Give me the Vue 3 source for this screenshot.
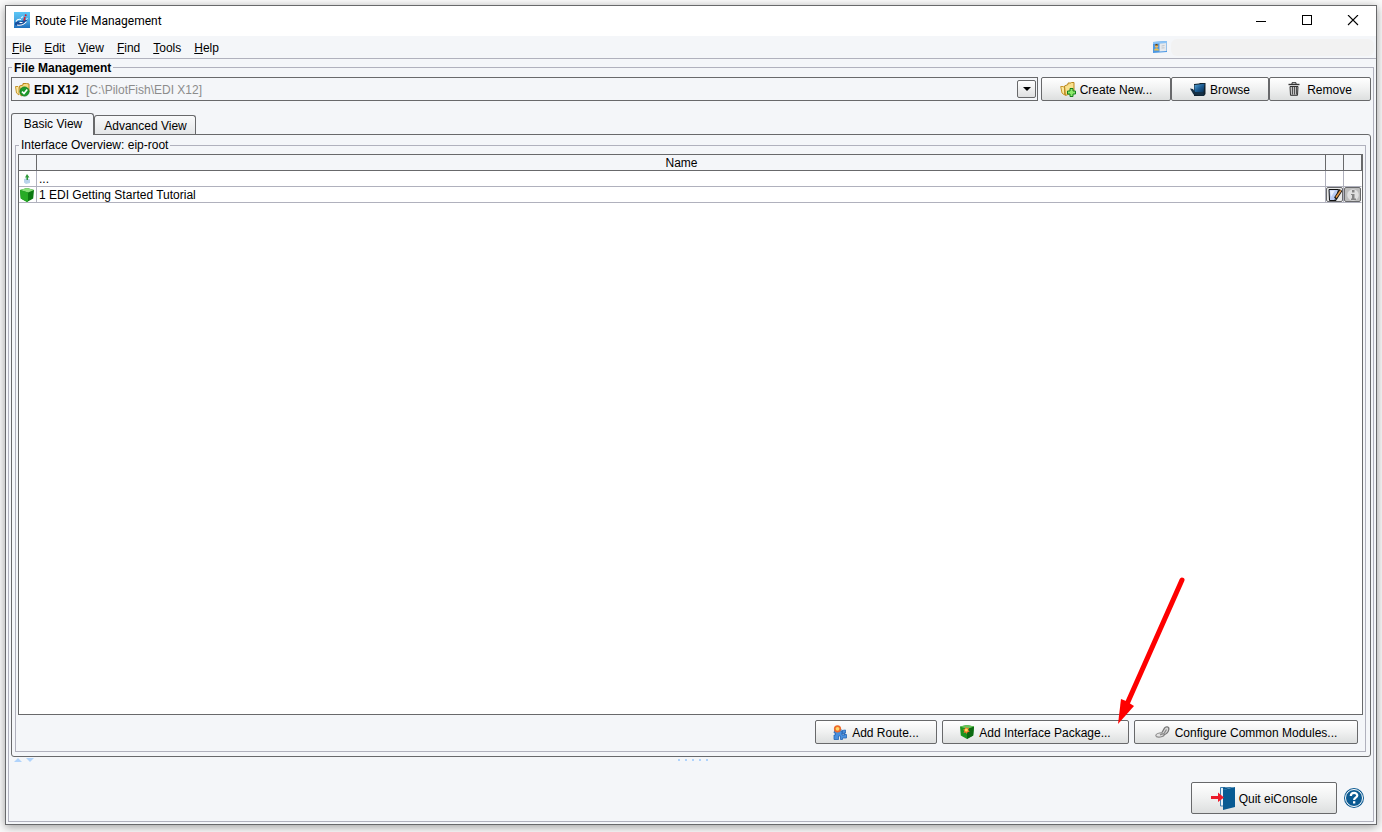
<script setup>
import { ref } from 'vue'

const menus = ['File', 'Edit', 'View', 'Find', 'Tools', 'Help']
const workspace = ref('EDI X12')
const activeTab = ref('basic')
</script>

<template>
  <div class="desktop">
    <main class="window">
      <header class="titlebar">
        <svg class="app-icon" width="16" height="16" viewBox="0 0 16 16" aria-hidden="true">
          <defs>
            <linearGradient id="appBg" x1="0" y1="0" x2="0" y2="1">
              <stop offset="0" stop-color="#5cc6f6" />
              <stop offset=".5" stop-color="#4aa9e2" />
              <stop offset="1" stop-color="#1f6fbd" />
            </linearGradient>
          </defs>
          <rect width="16" height="16" fill="url(#appBg)" />
          <path d="M1 11c1-1.500 3-2 5-1.500l3-1 4-1c0 3-3 6-7 6.500-2 .2-4-.5-5-1z" fill="#164f9e" />
          <path d="M2 9.500c1-1.800 3-2.500 5-2M3 13c3.500.8 7-.3 9.500-3.500" fill="none" stroke="#fff" stroke-width="1.100" />
          <path d="M5.500 10.500h3M12 7.500l1.500-1" stroke="#fff" stroke-width="1" />
          <path d="M7 6l2-1.500" stroke="#d8f1ff" stroke-width="1.200" />
          <path d="M11 5L10 8.500" stroke="#d3202e" stroke-width="1.600" />
          <circle cx="11.700" cy="3.300" r="1" fill="#d3202e" />
        </svg>
        <h1>Route File Management</h1>
        <div class="window-controls">
          <button type="button" aria-label="Minimize">
            <svg width="12" height="12" viewBox="0 0 12 12"><path d="M1 6.500h10" stroke="#000" /></svg>
          </button>
          <button type="button" aria-label="Maximize">
            <svg width="12" height="12" viewBox="0 0 12 12"><rect x="1.500" y=".5" width="9" height="9" fill="none" stroke="#000" /></svg>
          </button>
          <button type="button" aria-label="Close">
            <svg width="12" height="12" viewBox="0 0 12 12"><path d="M1 0l10 10M11 0L1 10" stroke="#000" stroke-width="1.100" /></svg>
          </button>
        </div>
      </header>

      <nav class="menubar">
        <button v-for="m in menus" :key="m" type="button" class="menu"><u>{{ m[0] }}</u>{{ m.slice(1) }}</button>
        <div class="account">
          <svg width="14" height="12" viewBox="0 0 14 12" aria-hidden="true">
            <path d="M0 1L14 0v11L0 12z" fill="#4a97e4" />
            <path d="M0 1L14 0v2L0 3z" fill="#8cc4f6" />
            <path d="M6.500 2.500l7-.5v8l-7 .5z" fill="#e6eaee" />
            <path d="M8.500 5l3-.5M8.500 7l3-.2" stroke="#b4bac2" stroke-width=".8" />
            <circle cx="3.500" cy="5" r="1.800" fill="#f1b95f" />
            <path d="M2 4.500c0-2 3-2 3 0" fill="#5b4320" />
            <path d="M1 9.500c.3-3 4.700-3 5 0z" fill="#efc04a" />
          </svg>
          <span class="account-name"></span>
        </div>
      </nav>

      <fieldset class="group outer">
        <legend class="bold">File Management</legend>

        <div class="toolbar">
          <div class="combo">
            <svg width="15" height="15" viewBox="0 0 15 15" aria-hidden="true">
              <path d="M.5 4.500H3l1 1V13L1.500 11z" fill="#fbe9a0" stroke="#c7962a" />
              <path d="M4.500 4L8 3V1.500h3.500L14 2v8l-8 4z" fill="#f7dc83" stroke="#b9871d" />
              <circle cx="9.500" cy="9.500" r="4.600" fill="#1c9a2c" stroke="#0d7a1c" stroke-width=".8" />
              <path d="M7 9.600l2 2 3.200-4" fill="none" stroke="#fff" stroke-width="1.600" />
            </svg>
            <select v-model="workspace" aria-label="Workspace">
              <option>EDI X12</option>
            </select>
            <span class="path">[C:\PilotFish\EDI X12]</span>
            <button type="button" class="drop" aria-label="Open list">
              <svg width="8" height="4" viewBox="0 0 8 4"><path d="M0 0h8L4 4z" fill="#000" /></svg>
            </button>
          </div>
          <button type="button" class="btn create">
            <svg width="16" height="16" viewBox="0 0 16 16" aria-hidden="true">
              <path d="M.7 5.500h2.300l1.500 1V14L2 12z" fill="#fbe9a0" stroke="#c7962a" />
              <path d="M4.500 5L8 3.500V2h3l.5-.5H14V11l-8.500 3.500z" fill="#f9e08c" stroke="#b9871d" />
              <path d="M10 7.500h3V10h2.500v3H13v2.500h-3V13H7.500v-3H10z" fill="#8be86a" stroke="#12801a" />
            </svg>
            <span>Create New...</span>
          </button>
          <button type="button" class="btn browse">
            <svg width="16" height="15" viewBox="0 0 16 15" aria-hidden="true">
              <defs>
                <linearGradient id="folder" x1="0" y1="0" x2="1" y2="1">
                  <stop offset="0" stop-color="#5fa9d8" />
                  <stop offset=".5" stop-color="#1a5c94" />
                  <stop offset="1" stop-color="#072a4c" />
                </linearGradient>
              </defs>
              <path d="M4 2L9 1.500 10 1h5.500v11L14 14H4z" fill="#10202c" />
              <path d="M4.500 3l10-1.200-1 9H4.500z" fill="url(#folder)" />
              <path d="M0 6.500l3 .5 2 3 8.500.5.5 3.500-10.500-1.500z" fill="#152f44" />
            </svg>
            <span>Browse</span>
          </button>
          <button type="button" class="btn remove">
            <svg width="12" height="14" viewBox="0 0 12 14" aria-hidden="true">
              <path d="M4 2V.7h4V2" fill="none" stroke="#333" />
              <path d="M.5 2.500h11" stroke="#333" stroke-width="1.400" />
              <path d="M2 4.500h8l-.5 8.800h-7z" fill="#c4c4c4" stroke="#333" />
              <path d="M4.500 5v7.500M6.500 5v7.500M8.500 5v7.500" stroke="#444" stroke-width=".9" />
            </svg>
            <span>Remove</span>
          </button>
        </div>

        <div class="tabs" role="tablist">
          <button type="button" role="tab" class="tab" :class="{ active: activeTab === 'basic' }" :aria-selected="activeTab === 'basic'" @click="activeTab = 'basic'">Basic View</button>
          <button type="button" role="tab" class="tab" :class="{ active: activeTab === 'advanced' }" :aria-selected="activeTab === 'advanced'" @click="activeTab = 'advanced'">Advanced View</button>
        </div>

        <section class="panel" role="tabpanel">
          <fieldset class="group inner">
            <legend>Interface Overview: eip-root</legend>
            <div class="sheet">
              <table>
                <colgroup>
                  <col class="narrow" />
                  <col />
                  <col class="narrow" />
                  <col class="narrow" />
                </colgroup>
                <thead>
                  <tr><th></th><th>Name</th><th></th><th></th></tr>
                </thead>
                <tbody>
                  <tr>
                    <td class="icon">
                      <svg width="8" height="10" viewBox="0 0 8 10" aria-hidden="true">
                        <path d="M1 5l3-1 3 1.500V9L3 10 1 8.500z" fill="#b9d3ea" />
                        <path d="M4 0l2.500 3.500H5V6H3.500V3.500H2z" fill="#2f9a3c" />
                      </svg>
                    </td>
                    <td>...</td>
                    <td></td>
                    <td></td>
                  </tr>
                  <tr>
                    <td class="icon">
                      <svg width="14" height="14" viewBox="0 0 14 14" aria-hidden="true">
                        <path d="M0 2l7-2 7 2-.8 8.500L7 14 .8 10.500z" fill="#0c7a12" />
                        <path d="M0 2l7-2 7 2-6 2.500z" fill="#8be07c" />
                        <path d="M0 2l8 2.500V13.500L7 14 .8 10.500z" fill="#27ab26" />
                      </svg>
                    </td>
                    <td>1 EDI Getting Started Tutorial</td>
                    <td class="icon">
                      <button type="button" class="cell-btn" aria-label="Edit">
                        <svg width="14" height="12" viewBox="0 0 14 12">
                          <path d="M1 .5h9.500L8 11.500H1.500z" fill="#b9cbf5" stroke="#111" />
                          <path d="M2 1.500h5L3 8z" fill="#eaf0ff" />
                          <path d="M13 1L7.500 9.500" stroke="#111" stroke-width="3.400" />
                          <path d="M12.800 1.500L8 8.500" stroke="#e89a4a" stroke-width="1.500" />
                          <path d="M6.500 11l.5-2 1.500 1z" fill="#111" />
                        </svg>
                      </button>
                    </td>
                    <td class="icon">
                      <button type="button" class="cell-btn info" aria-label="Information">
                        <svg width="14" height="12" viewBox="0 0 14 12">
                          <circle cx="7" cy="6" r="5.800" fill="#e0e0e0" />
                          <path d="M6 1h2.500v2.500H6zM5 5h3.500v4.500H10V11H5V9.500h1V6H5z" fill="#858585" />
                        </svg>
                      </button>
                    </td>
                  </tr>
                </tbody>
              </table>
            </div>
            <div class="actions">
              <button type="button" class="btn route">
                <svg width="14" height="15" viewBox="0 0 14 15" aria-hidden="true">
                  <path d="M2 4h6v2.500c1.500-.8 2.500.5 1 2V10H12V8.500L9 9V5.500l3.500-.5V8H11v1.500h2.500V13H9.500v1.500H7.500V11h-2v3.500H1V10h1.500V8H1z" fill="#4a90de" stroke="#2465b4" stroke-width=".8" />
                  <circle cx="4.500" cy="3.800" r="3.600" fill="#ee6b2a" />
                  <circle cx="4.500" cy="3.800" r="1.900" fill="#ffd76a" />
                </svg>
                <span>Add Route...</span>
              </button>
              <button type="button" class="btn package">
                <svg width="14" height="14" viewBox="0 0 14 14" aria-hidden="true">
                  <path d="M0 1.500L7 0l7 1.500-.8 9L7 14 .8 10.500z" fill="#1d9420" />
                  <path d="M7 4l7-2.500-.8 9L7 14z" fill="#0c6912" />
                  <path d="M0 1.500L7 0l7 1.500L7 4z" fill="#69c45a" />
                  <path d="M5.500 1.500l1 1.700L9 2.500 8.200 5l1.500 1.500-2.300.7-.5 1.800-1.400-1.600-2 .6.800-2L3 4.500 4.800 4z" fill="#f2752c" />
                  <circle cx="6.300" cy="5" r="1.500" fill="#ffe35c" />
                </svg>
                <span>Add Interface Package...</span>
              </button>
              <button type="button" class="btn modules">
                <svg width="15" height="14" viewBox="0 0 15 14" aria-hidden="true">
                  <ellipse cx="5" cy="10" rx="4.200" ry="2" fill="#e4e4e4" stroke="#8a8a8a" stroke-width="1.200" transform="rotate(-10 5 10)" />
                  <path d="M7 7.500L9.500 3.200c1.200-2 4.800-1.700 4.300 1.300-.4 2.500-2.300 4.500-5.300 5.500" fill="#dadada" stroke="#777" stroke-width="1.300" />
                  <path d="M5 9.800l4-1.300 2.500-4" fill="none" stroke="#8a8a8a" stroke-width="1.300" />
                </svg>
                <span>Configure Common Modules...</span>
              </button>
            </div>
          </fieldset>
        </section>

        <div class="divider" aria-hidden="true">
          <svg width="20" height="4" viewBox="0 0 20 4"><path d="M0 4h8L4 0zM12 0h8l-4 4z" fill="#b0d3fb" /></svg>
          <div class="grip"><i v-for="n in 5" :key="n"></i></div>
        </div>

        <footer class="footer">
          <button type="button" class="btn quit">
            <svg width="24" height="24" viewBox="0 0 24 24" aria-hidden="true">
              <path d="M9.500 1.500H14v18.500H9.500z" fill="#e3f1fa" stroke="#3f7fb0" />
              <path d="M12 4l12-3v20l-12 3z" fill="#075a93" />
              <path d="M12 4V1.500L23 1z" fill="#075a93" />
              <path d="M0 10h7V6.500l6 5L7 16v-3H0z" fill="#ec1c2b" />
            </svg>
            <span>Quit eiConsole</span>
          </button>
          <button type="button" class="help" aria-label="Help">
            <svg width="20" height="20" viewBox="0 0 20 20">
              <circle cx="10" cy="10" r="10" fill="#0b5a92" />
              <circle cx="10" cy="10" r="8.500" fill="none" stroke="#fff" stroke-width="1" />
              <path d="M6.800 8c0-4 6.500-4 6.500-.5 0 2.200-3.200 2.200-3.200 4.500" fill="none" stroke="#fff" stroke-width="2.200" />
              <rect x="9" y="13.200" width="2.300" height="2.300" fill="#fff" />
            </svg>
          </button>
        </footer>
      </fieldset>

      <svg class="pointer" width="72" height="150" viewBox="0 0 72 150" aria-hidden="true">
        <path d="M67 5L12 129" stroke="#fe0000" stroke-width="5" stroke-linecap="round" />
        <path d="M3 149l3-25 5 2 8 5z" fill="#fe0000" />
      </svg>
    </main>
  </div>
</template>

<style>
html,
body {
  margin: 0;
  background: #fbfbfb;
}
</style>

<style scoped>
.desktop {
  box-sizing: border-box;
  display: flex;
  min-height: 100vh;
  padding: 5px 5px 7px;
  overflow: hidden;
  font: 12px/15px "Liberation Sans", Arial, sans-serif;
  color: #000;
}
.window {
  position: relative;
  flex: 1;
  min-width: 0;
  display: flex;
  flex-direction: column;
  border: 1px solid #68696b;
  background: #f4f6f9;
  box-shadow: 0 2px 9px rgba(0, 0, 0, 0.38);
}
button,
select {
  margin: 0;
  padding: 0;
  border: 0;
  background: none;
  font: inherit;
  color: inherit;
}
svg {
  display: block;
  flex: none;
}
.titlebar {
  display: flex;
  align-items: center;
  height: 30px;
  padding-left: 8px;
  background: #fff;
}
.app-icon {
  margin-bottom: 2px;
}
h1 {
  margin: 0 0 0 5px;
  font: 12px/16px Roboto, "Noto Sans", sans-serif;
}
.window-controls {
  display: flex;
  margin-left: auto;
}
.window-controls button {
  display: grid;
  place-items: center;
  width: 46px;
  height: 30px;
}
.menubar {
  display: flex;
  align-items: center;
  gap: 13px;
  height: 22px;
  padding-left: 6px;
  border-bottom: 1px solid #b0b1bd;
}
.menu {
  padding-top: 2px;
}
.account {
  display: flex;
  align-items: center;
  gap: 4px;
  margin-left: auto;
  padding-right: 2px;
}
.account-name {
  width: 203px;
  height: 17px;
  border-radius: 6px;
  background: #f2f2f2;
}
.group {
  box-sizing: border-box;
  min-width: 0;
  margin: 0;
  padding: 0 2px;
  border: 1px solid #b0b1bd;
  display: flex;
  flex-direction: column;
  flex: 1;
}
legend {
  height: 15px;
  padding: 0 2px;
}
.bold {
  font-weight: bold;
  line-height: 17px;
}
.outer {
  margin: 1px 2px 2px;
  padding-bottom: 7px;
}
.outer > legend {
  margin-left: 1px;
}
.toolbar {
  display: flex;
  margin-top: 2px;
}
.combo {
  box-sizing: border-box;
  flex: 1;
  display: flex;
  align-items: center;
  height: 24px;
  margin-right: 3px;
  padding: 0 1px 0 3px;
  border: 1px solid #68696b;
}
.combo select {
  appearance: none;
  margin-left: 4px;
  padding-top: 2px;
  font-weight: bold;
}
.path {
  flex: 1;
  margin-left: 7px;
  padding-top: 2px;
  color: #8c8c8c;
}
.drop {
  box-sizing: border-box;
  display: grid;
  place-items: center;
  width: 19px;
  height: 18px;
  border: 1px solid #68696b;
  border-radius: 2px;
  background: linear-gradient(#fff, #dfe0e1);
}
.btn {
  box-sizing: border-box;
  display: flex;
  align-items: center;
  justify-content: center;
  gap: 5px;
  height: 24px;
  border: 1px solid #68696b;
  border-radius: 2px;
  background: linear-gradient(#fff, #f0f1f1 50%, #dddfdf);
  white-space: nowrap;
}
.btn span {
  padding-top: 2px;
}
.create {
  width: 130px;
  gap: 4px;
}
.browse {
  width: 98px;
  gap: 4px;
}
.remove {
  width: 102px;
  gap: 7px;
}
.tabs {
  display: flex;
  align-items: flex-end;
  height: 21px;
  margin-top: 12px;
}
.tab {
  box-sizing: border-box;
  width: 102px;
  height: 19px;
  padding: 2px 0 0 1px;
  border: 1px solid #68696b;
  border-bottom: 0;
  border-radius: 3px 3px 0 0;
  background: linear-gradient(#f9fafb, #e4e6e8);
}
.tab.active {
  position: relative;
  z-index: 1;
  width: 83px;
  height: 22px;
  margin-bottom: -1px;
  padding-top: 0;
  background: #f4f6f9;
}
.panel {
  flex: 1;
  display: flex;
  padding: 3px 4px 4px 3px;
  border: 1px solid #68696b;
  border-radius: 0 3px 3px 3px;
}
.inner > legend {
  margin-left: 1px;
}
.sheet {
  flex: 1;
  margin-top: 1px;
  border: 1px solid #68696b;
  background: #fff;
}
table {
  width: 100%;
  table-layout: fixed;
  border-collapse: separate;
  border-spacing: 0;
}
.narrow {
  width: 18px;
}
th,
td {
  box-sizing: border-box;
  height: 16px;
  padding: 1px 1px 0 2px;
  border-right: 1px solid #b0b1bd;
  border-bottom: 1px solid #b0b1bd;
  text-align: left;
  font-weight: normal;
  line-height: 14px;
}
th {
  padding-top: 2px;
  line-height: 13px;
  border-color: #68696b;
  background: #f4f6f9;
  text-align: center;
}
td:last-child {
  border-right-color: #fff;
}
td.icon {
  padding: 0;
}
td.icon > svg {
  margin: 0 auto;
}
td.icon:first-child {
  padding-right: 1px;
}
.cell-btn {
  box-sizing: border-box;
  display: grid;
  place-items: center;
  width: 17px;
  height: 15px;
  border: 1px solid #68696b;
  border-radius: 2px;
  background: #e9e9e9;
}
.info {
  background: #bdbdbd;
}
.actions {
  display: flex;
  justify-content: flex-end;
  gap: 5px;
  padding: 5px 5px 7px 0;
}
.route {
  width: 122px;
}
.package {
  width: 187px;
}
.modules {
  width: 224px;
}
.divider {
  display: grid;
  grid-template-columns: 1fr auto 1fr;
  align-items: center;
  height: 6px;
  padding-left: 3px;
}
.grip {
  display: flex;
  gap: 5px;
}
.grip i {
  width: 2px;
  height: 2px;
  background: #b0d3fb;
}
.footer {
  display: flex;
  align-items: center;
  justify-content: flex-end;
  gap: 7px;
  margin-top: 19px;
  padding-right: 7px;
}
.quit {
  width: 146px;
  height: 32px;
  gap: 4px;
}
.pointer {
  position: absolute;
  right: 189px;
  bottom: 99px;
  pointer-events: none;
}
</style>
